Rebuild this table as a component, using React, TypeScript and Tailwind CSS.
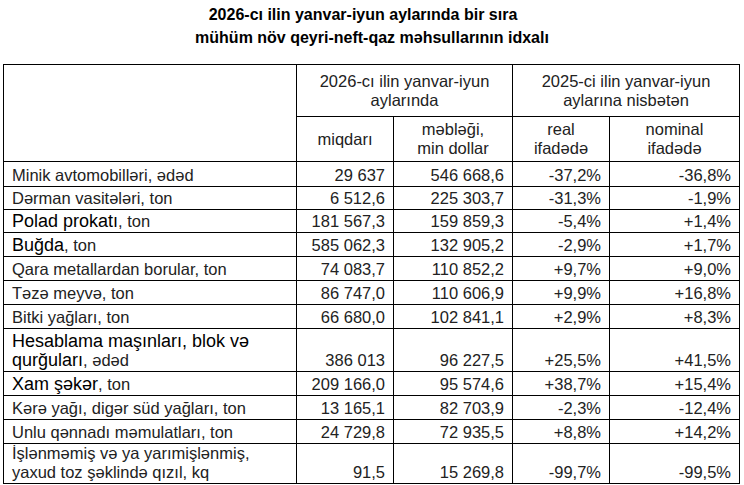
import { Fragment } from "react";

const rows: { name: string[]; unit: string; big?: boolean; h: string; q: string; v: string; r: string; n: string }[] = [
  { name: ["Minik avtomobilləri, ədəd"], unit: "", h: "h-[25px]", q: "29 637", v: "546 668,6", r: "-37,2%", n: "-36,8%" },
  { name: ["Dərman vasitələri, ton"], unit: "", h: "h-[23px]", q: "6 512,6", v: "225 303,7", r: "-31,3%", n: "-1,9%" },
  { name: ["Polad prokatı"], unit: ", ton", big: true, h: "h-[23px]", q: "181 567,3", v: "159 859,3", r: "-5,4%", n: "+1,4%" },
  { name: ["Buğda"], unit: ", ton", big: true, h: "h-[24px]", q: "585 062,3", v: "132 905,2", r: "-2,9%", n: "+1,7%" },
  { name: ["Qara metallardan borular, ton"], unit: "", h: "h-[24px]", q: "74 083,7", v: "110 852,2", r: "+9,7%", n: "+9,0%" },
  { name: ["Təzə meyvə, ton"], unit: "", h: "h-[24px]", q: "86 747,0", v: "110 606,9", r: "+9,9%", n: "+16,8%" },
  { name: ["Bitki yağları, ton"], unit: "", h: "h-[24px]", q: "66 680,0", v: "102 841,1", r: "+2,9%", n: "+8,3%" },
  { name: ["Hesablama maşınları, blok və", "qurğuları"], unit: ", ədəd", big: true, h: "h-[43px]", q: "386 013", v: "96 227,5", r: "+25,5%", n: "+41,5%" },
  { name: ["Xam şəkər"], unit: ", ton", big: true, h: "h-[24px]", q: "209 166,0", v: "95 574,6", r: "+38,7%", n: "+15,4%" },
  { name: ["Kərə yağı, digər süd yağları, ton"], unit: "", h: "h-[24px]", q: "13 165,1", v: "82 703,9", r: "-2,3%", n: "-12,4%" },
  { name: ["Unlu qənnadı məmulatları, ton"], unit: "", h: "h-[24px]", q: "24 729,8", v: "72 935,5", r: "+8,8%", n: "+14,2%" },
  { name: ["İşlənməmiş və ya yarımişlənmiş,", "yaxud toz şəklində qızıl, kq"], unit: "", h: "h-[38px]", q: "91,5", v: "15 269,8", r: "-99,7%", n: "-99,5%" },
];

const cell = "border border-black align-bottom p-0";
const num = `${cell} pr-2 pb-[1px] text-right`;
const head = "border border-black p-0 text-center font-normal align-middle";

function Lines({ parts }: { parts: string[] }) {
  return (
    <>
      {parts.map((p, i) => (
        <Fragment key={i}>
          {i > 0 && <br />}
          {p}
        </Fragment>
      ))}
    </>
  );
}

export default function App() {
  return (
    <div className="w-[744px] h-[485px] bg-white font-['Liberation_Sans',Arial,sans-serif] text-[#222] overflow-hidden">
      <div className="pt-[3px] text-center text-[16px] font-bold leading-[23px] text-black">
        <div className="pr-[18px]">2026-cı ilin yanvar-iyun aylarında bir sıra</div>
        <div>mühüm növ qeyri-neft-qaz məhsullarının idxalı</div>
      </div>
      <table className="mt-[15px] ml-[3px] w-[736px] table-fixed border-collapse text-[16.5px] leading-[19px]">
        <colgroup>
          <col className="w-[293px]" />
          <col className="w-[97px]" />
          <col className="w-[119px]" />
          <col className="w-[97px]" />
          <col className="w-[130px]" />
        </colgroup>
        <thead>
          <tr className="h-[52px]">
            <th rowSpan={2} className="border border-black"></th>
            <th colSpan={2} className={head}>
              2026-cı ilin yanvar-iyun
              <br />
              aylarında
            </th>
            <th colSpan={2} className={head}>
              2025-ci ilin yanvar-iyun
              <br />
              aylarına nisbətən
            </th>
          </tr>
          <tr className="h-[45px]">
            <th className={head}>miqdarı</th>
            <th className={head}>
              məbləği,
              <br />
              min dollar
            </th>
            <th className={head}>
              real
              <br />
              ifadədə
            </th>
            <th className={head}>
              nominal
              <br />
              ifadədə
            </th>
          </tr>
        </thead>
        <tbody>
          {rows.map((row) => (
            <tr key={row.name.join(" ")} className={row.h}>
              <td className={`${cell} pl-2 pb-[1px] text-left whitespace-nowrap`}>
                {row.big ? (
                  <span className="text-[18px] leading-[19px] text-black">
                    <Lines parts={row.name} />
                  </span>
                ) : (
                  <Lines parts={row.name} />
                )}
                {row.unit}
              </td>
              <td className={num}>{row.q}</td>
              <td className={num}>{row.v}</td>
              <td className={num}>{row.r}</td>
              <td className={num}>{row.n}</td>
            </tr>
          ))}
        </tbody>
      </table>
    </div>
  );
}
